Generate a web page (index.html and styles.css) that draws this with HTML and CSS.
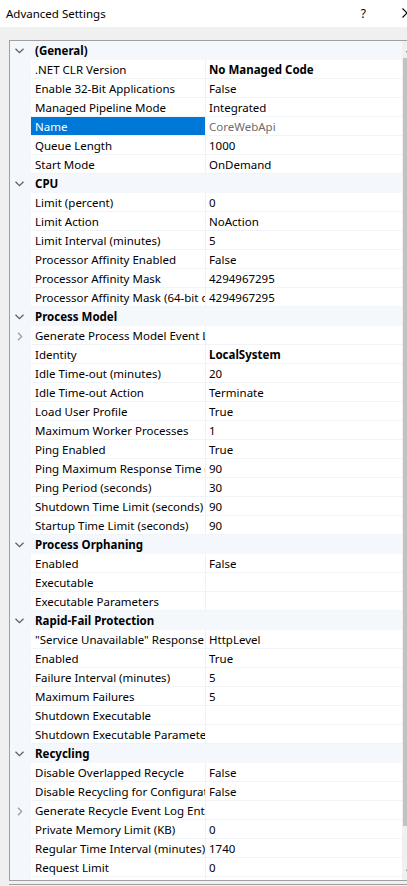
FILE: index.html
```html
<!DOCTYPE html>
<html>
<head>
<meta charset="utf-8">
<title>Advanced Settings</title>
<link rel="stylesheet" href="styles.css">
</head>
<body>
<div class="titlebar">
  <span class="title">Advanced Settings</span>
  <span class="help">?</span>
  <svg class="close" width="10" height="10" viewBox="0 0 10 10"><path d="M0.5 0.5 L9.5 9.5 M9.5 0.5 L0.5 9.5" stroke="#000" stroke-width="1.1" fill="none"/></svg>
</div>
<div class="content">
  <div class="grid">
    <div class="rows">
      <div class="cat"><span class="gut"><svg class="chev" width="9" height="6" viewBox="0 0 9 6"><path d="M0.5 0.8 L4.5 4.6 L8.5 0.8" stroke="#606060" stroke-width="1.3" fill="none"/></svg></span><span class="cat-name">(General)</span></div>
      <div class="row"><span class="gut"></span><span class="name">.NET CLR Version</span><span class="val b">No Managed Code</span></div>
      <div class="row"><span class="gut"></span><span class="name">Enable 32-Bit Applications</span><span class="val">False</span></div>
      <div class="row"><span class="gut"></span><span class="name">Managed Pipeline Mode</span><span class="val">Integrated</span></div>
      <div class="row sel"><span class="gut"></span><span class="name">Name</span><span class="val ro">CoreWebApi</span></div>
      <div class="row"><span class="gut"></span><span class="name">Queue Length</span><span class="val">1000</span></div>
      <div class="row"><span class="gut"></span><span class="name">Start Mode</span><span class="val">OnDemand</span></div>

      <div class="cat"><span class="gut"><svg class="chev" width="9" height="6" viewBox="0 0 9 6"><path d="M0.5 0.8 L4.5 4.6 L8.5 0.8" stroke="#606060" stroke-width="1.3" fill="none"/></svg></span><span class="cat-name">CPU</span></div>
      <div class="row"><span class="gut"></span><span class="name">Limit (percent)</span><span class="val">0</span></div>
      <div class="row"><span class="gut"></span><span class="name">Limit Action</span><span class="val">NoAction</span></div>
      <div class="row"><span class="gut"></span><span class="name">Limit Interval (minutes)</span><span class="val">5</span></div>
      <div class="row"><span class="gut"></span><span class="name">Processor Affinity Enabled</span><span class="val">False</span></div>
      <div class="row"><span class="gut"></span><span class="name">Processor Affinity Mask</span><span class="val">4294967295</span></div>
      <div class="row"><span class="gut"></span><span class="name">Processor Affinity Mask (64-bit option)</span><span class="val">4294967295</span></div>

      <div class="cat"><span class="gut"><svg class="chev" width="9" height="6" viewBox="0 0 9 6"><path d="M0.5 0.8 L4.5 4.6 L8.5 0.8" stroke="#606060" stroke-width="1.3" fill="none"/></svg></span><span class="cat-name">Process Model</span></div>
      <div class="row"><span class="gut"><svg class="exp" width="6" height="9" viewBox="0 0 6 9"><path d="M1 0.8 L4.6 4.5 L1 8.2" stroke="#a0a0a0" stroke-width="1.3" fill="none"/></svg></span><span class="name">Generate Process Model Event Log Entry</span><span class="val"></span></div>
      <div class="row"><span class="gut"></span><span class="name">Identity</span><span class="val b">LocalSystem</span></div>
      <div class="row"><span class="gut"></span><span class="name">Idle Time-out (minutes)</span><span class="val">20</span></div>
      <div class="row"><span class="gut"></span><span class="name">Idle Time-out Action</span><span class="val">Terminate</span></div>
      <div class="row"><span class="gut"></span><span class="name">Load User Profile</span><span class="val">True</span></div>
      <div class="row"><span class="gut"></span><span class="name">Maximum Worker Processes</span><span class="val">1</span></div>
      <div class="row"><span class="gut"></span><span class="name">Ping Enabled</span><span class="val">True</span></div>
      <div class="row"><span class="gut"></span><span class="name">Ping Maximum Response Time (seconds)</span><span class="val">90</span></div>
      <div class="row"><span class="gut"></span><span class="name">Ping Period (seconds)</span><span class="val">30</span></div>
      <div class="row"><span class="gut"></span><span class="name">Shutdown Time Limit (seconds)</span><span class="val">90</span></div>
      <div class="row"><span class="gut"></span><span class="name">Startup Time Limit (seconds)</span><span class="val">90</span></div>

      <div class="cat"><span class="gut"><svg class="chev" width="9" height="6" viewBox="0 0 9 6"><path d="M0.5 0.8 L4.5 4.6 L8.5 0.8" stroke="#606060" stroke-width="1.3" fill="none"/></svg></span><span class="cat-name">Process Orphaning</span></div>
      <div class="row"><span class="gut"></span><span class="name">Enabled</span><span class="val">False</span></div>
      <div class="row"><span class="gut"></span><span class="name">Executable</span><span class="val"></span></div>
      <div class="row"><span class="gut"></span><span class="name">Executable Parameters</span><span class="val"></span></div>

      <div class="cat"><span class="gut"><svg class="chev" width="9" height="6" viewBox="0 0 9 6"><path d="M0.5 0.8 L4.5 4.6 L8.5 0.8" stroke="#606060" stroke-width="1.3" fill="none"/></svg></span><span class="cat-name">Rapid-Fail Protection</span></div>
      <div class="row"><span class="gut"></span><span class="name">"Service Unavailable" Response Type</span><span class="val">HttpLevel</span></div>
      <div class="row"><span class="gut"></span><span class="name">Enabled</span><span class="val">True</span></div>
      <div class="row"><span class="gut"></span><span class="name">Failure Interval (minutes)</span><span class="val">5</span></div>
      <div class="row"><span class="gut"></span><span class="name">Maximum Failures</span><span class="val">5</span></div>
      <div class="row"><span class="gut"></span><span class="name">Shutdown Executable</span><span class="val"></span></div>
      <div class="row"><span class="gut"></span><span class="name">Shutdown Executable Parameters</span><span class="val"></span></div>

      <div class="cat"><span class="gut"><svg class="chev" width="9" height="6" viewBox="0 0 9 6"><path d="M0.5 0.8 L4.5 4.6 L8.5 0.8" stroke="#606060" stroke-width="1.3" fill="none"/></svg></span><span class="cat-name">Recycling</span></div>
      <div class="row"><span class="gut"></span><span class="name">Disable Overlapped Recycle</span><span class="val">False</span></div>
      <div class="row"><span class="gut"></span><span class="name">Disable Recycling for Configuration Changes</span><span class="val">False</span></div>
      <div class="row"><span class="gut"><svg class="exp" width="6" height="9" viewBox="0 0 6 9"><path d="M1 0.8 L4.6 4.5 L1 8.2" stroke="#a0a0a0" stroke-width="1.3" fill="none"/></svg></span><span class="name">Generate Recycle Event Log Entry</span><span class="val"></span></div>
      <div class="row"><span class="gut"></span><span class="name">Private Memory Limit (KB)</span><span class="val">0</span></div>
      <div class="row"><span class="gut"></span><span class="name">Regular Time Interval (minutes)</span><span class="val">1740</span></div>
      <div class="row"><span class="gut"></span><span class="name">Request Limit</span><span class="val">0</span></div>
      <div class="row"><span class="gut"></span><span class="name">Specific Times</span><span class="val"></span></div>
    </div>
    <div class="sb">
      <div class="sb-btn"><svg width="9" height="6" viewBox="0 0 9 6"><path d="M0.5 5.2 L4.5 1.2 L8.5 5.2" stroke="#606060" stroke-width="1.3" fill="none"/></svg></div>
      <div class="sb-track"><div class="sb-thumb"></div></div>
      <div class="sb-btn"><svg width="9" height="6" viewBox="0 0 9 6"><path d="M0.5 0.8 L4.5 4.8 L8.5 0.8" stroke="#606060" stroke-width="1.3" fill="none"/></svg></div>
    </div>
  </div>
  <div class="desc"></div>
</div>
</body>
</html>
```

FILE: styles.css
```css
html, body {
  margin: 0;
  padding: 0;
}
body {
  width: 407px;
  height: 886px;
  overflow: hidden;
  background: #f0f0f0;
  font-family: "Noto Sans", "Open Sans", sans-serif;
  font-size: 11.5px;
  color: #000;
}
.titlebar {
  width: 420px;
  height: 27px;
  background: #fff;
  display: flex;
  align-items: center;
  box-sizing: border-box;
  padding: 0 8px 1px 6px;
}
.title {
  flex: 1;
  font-size: 11.5px;
}
.help {
  margin-right: 36px;
  font-size: 12px;
}
.close {
  display: block;
}
.content {
  padding: 13px 0 0 9px;
}
.grid {
  display: flex;
  width: 420px;
  border-top: 1px solid #a0a0a0;
  border-left: 1px solid #a0a0a0;
  border-bottom: 1px solid #a0a0a0;
}
.rows {
  width: 392px;
  height: 839px;
  overflow: hidden;
  background: #fff;
}
.row, .cat {
  display: flex;
  height: 19px;
  box-sizing: border-box;
  line-height: 18px;
}
.gut {
  width: 21px;
  flex: none;
  background: #f4f7fc;
  display: flex;
  align-items: center;
}
.chev {
  margin-left: 5px;
  margin-top: 1px;
}
.exp {
  margin-left: 7px;
  margin-top: 1px;
}
.cat {
  background: #f4f7fc;
}
.cat-name {
  font-weight: bold;
  padding: 1px 0 0 4px;
}
.name {
  width: 175px;
  flex: none;
  box-sizing: border-box;
  padding: 1px 0 0 4px;
  white-space: nowrap;
  overflow: hidden;
  border-bottom: 1px solid #f0f3f8;
  border-right: 1px solid #eef1f6;
}
.val {
  flex: 1;
  padding: 1px 0 0 3px;
  white-space: nowrap;
  overflow: hidden;
  border-bottom: 1px solid #f0f3f8;
}
.b {
  font-weight: bold;
}
.ro {
  color: #6d6d6d;
}
.sel .name {
  background: #0078d7;
  color: #fff;
}
.sb {
  width: 17px;
  flex: none;
  background: #f0f0f0;
  display: flex;
  flex-direction: column;
}
.sb-btn {
  height: 17px;
  display: flex;
  align-items: center;
  justify-content: center;
}
.sb-track {
  flex: 1;
  display: flex;
  flex-direction: column;
}
.sb-thumb {
  height: 768px;
  margin: 0 1px;
  background: #c2c2c2;
}
.desc {
  margin-top: 3px;
  border-top: 1px solid #a0a0a0;
  height: 20px;
}
```
